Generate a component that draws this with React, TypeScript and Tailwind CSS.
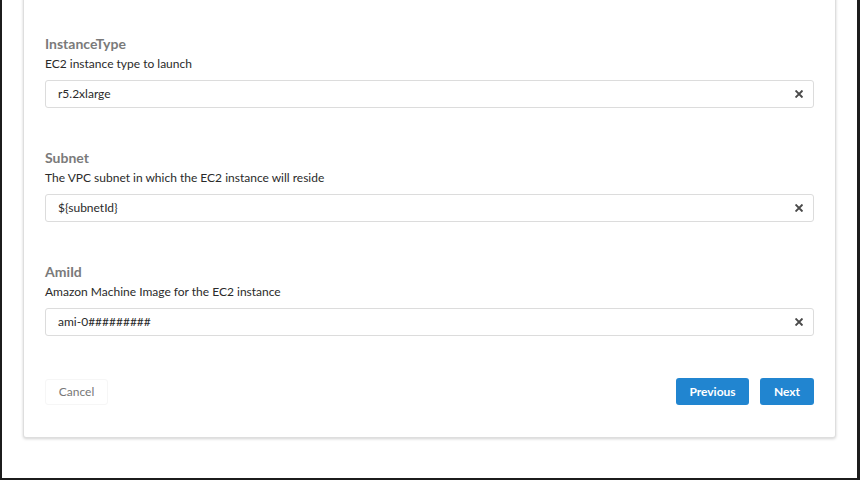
import React from "react";

const fields = [
  { label: "InstanceType", desc: "EC2 instance type to launch", value: "r5.2xlarge" },
  { label: "Subnet", desc: "The VPC subnet in which the EC2 instance will reside", value: "${subnetId}" },
  { label: "AmiId", desc: "Amazon Machine Image for the EC2 instance", value: "ami-0#########" },
];

function ClearIcon() {
  return (
    <svg width="8" height="8" viewBox="0 0 10 10" aria-hidden="true">
      <path d="M1.5 1.5 L8.5 8.5 M8.5 1.5 L1.5 8.5" stroke="#4a4a4a" strokeWidth="2.4" strokeLinecap="square" />
    </svg>
  );
}

export default function App() {
  return (
    <div
      className="w-[860px] h-[480px] box-border bg-white border-l-2 border-r-[3px] border-b-2 border-[#1c1c1c] overflow-hidden"
      style={{ fontFamily: "Lato, 'Open Sans', 'Liberation Sans', sans-serif" }}
    >
      <div className="ml-[21px] mr-[21px] mt-[-10px] bg-white border border-[#dedede] rounded-[3px] shadow-[0_1px_3px_rgba(0,0,0,0.18)] pt-[43px] pb-[32px] pl-[21px] pr-[21px]">
        {fields.map((f, i) => (
          <div key={f.label} className={i > 0 ? "mt-[40px]" : ""}>
            <div className="text-[14px] leading-[20px] font-bold text-[#7a7a7a]">{f.label}</div>
            <div className="text-[12px] leading-[18px] text-[#2a2a2a] mt-px">{f.desc}</div>
            <div className="mt-[7px] h-[28px] border border-[#dcdcdc] rounded-[3px] flex items-center justify-between pl-[12px] pr-[10px]">
              <span className="text-[12px] text-[#2a2a2a]">{f.value}</span>
              <ClearIcon />
            </div>
          </div>
        ))}
        <div className="mt-[42px] flex items-center justify-between">
          <button className="h-[26px] w-[63px] rounded-[3px] border border-[#f6f6f6] bg-white text-[12px] text-[#777777]">
            Cancel
          </button>
          <div className="flex gap-[11px]">
            <button className="h-[27px] w-[73px] rounded-[3px] bg-[#2185d0] text-white text-[12px] font-bold">
              Previous
            </button>
            <button className="h-[27px] w-[54px] rounded-[3px] bg-[#2185d0] text-white text-[12px] font-bold">
              Next
            </button>
          </div>
        </div>
      </div>
    </div>
  );
}
